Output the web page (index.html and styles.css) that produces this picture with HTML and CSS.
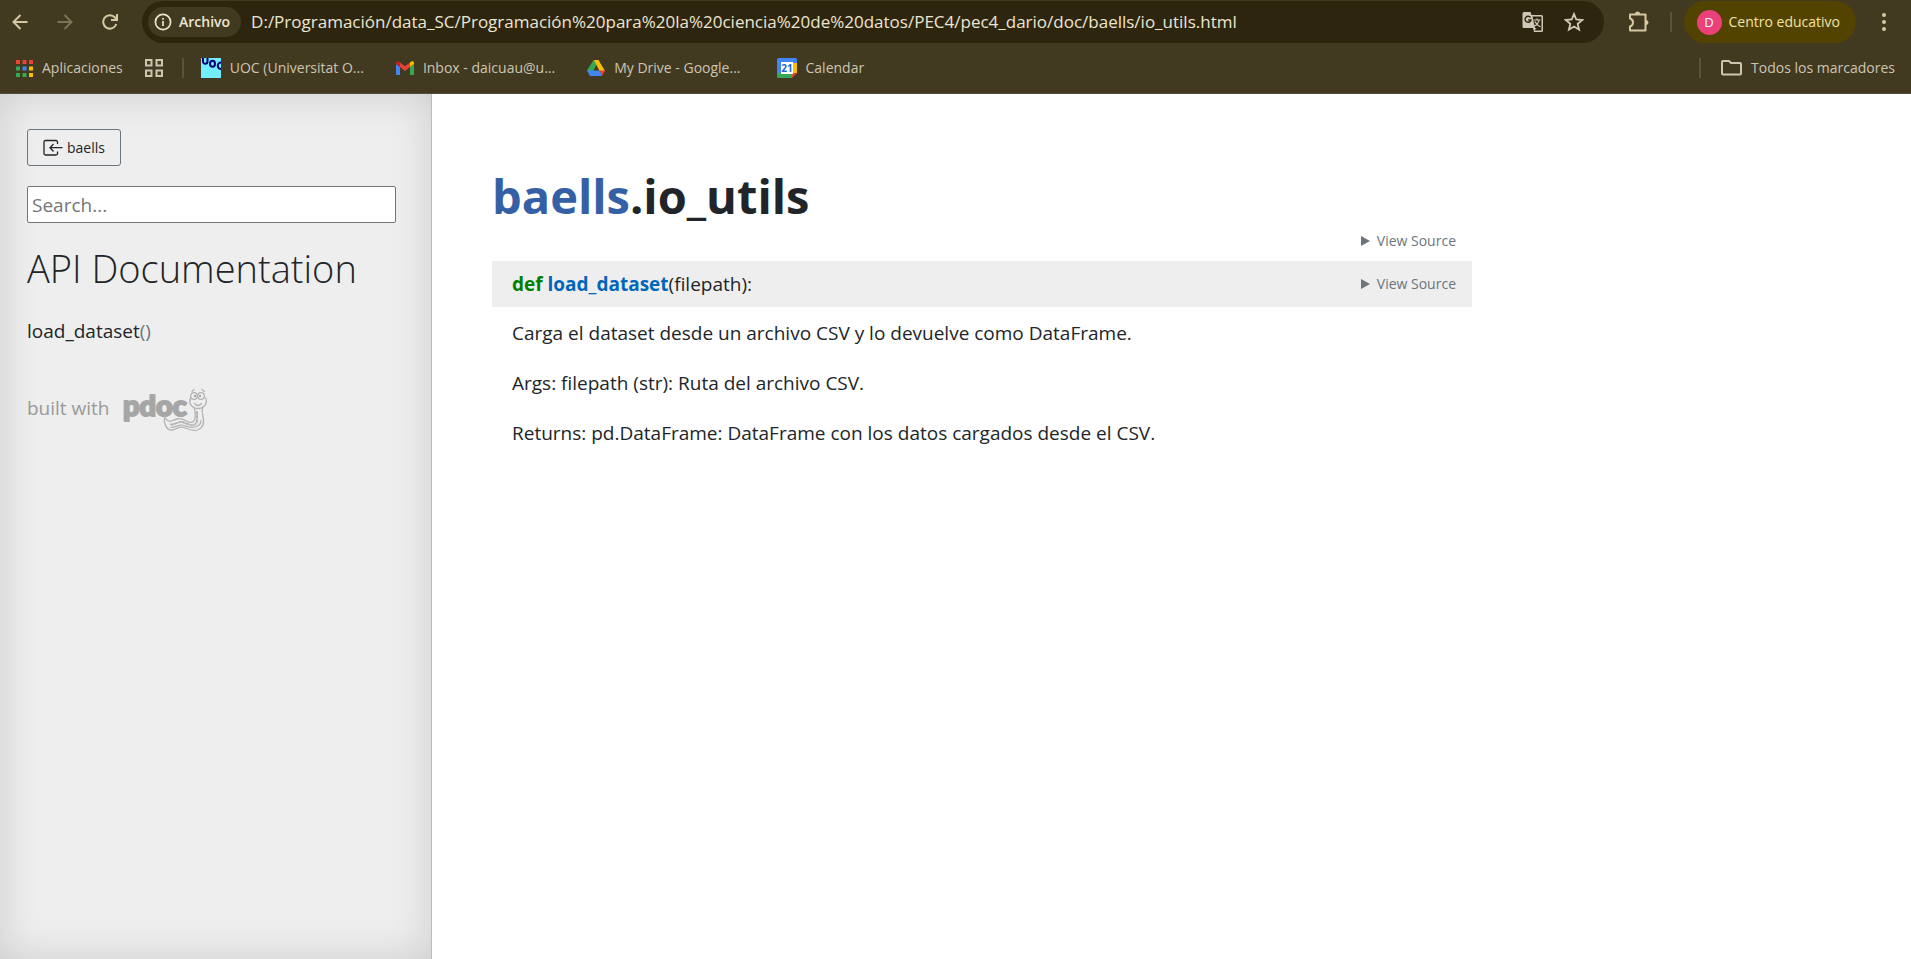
FILE: index.html
```html
<!DOCTYPE html>
<html lang="es">
<head>
<meta charset="utf-8">
<title>baells.io_utils API documentation</title>
<link rel="stylesheet" href="styles.css">
</head>
<body>
<header class="browser">
  <div class="toolbar">
    <div class="nav-buttons">
      <button class="icon-button" aria-label="Atrás"><svg width="16" height="16" viewBox="0 0 16 16" fill="none" stroke="#d6c9a2" stroke-width="2"><path d="M15.500 8H2M8.500 1L1.500 8l7 7"/></svg></button>
      <button class="icon-button" aria-label="Adelante"><svg width="16" height="16" viewBox="0 0 16 16" fill="none" stroke="#7e7354" stroke-width="2"><path d="M.5 8H14M7.500 1l7 7-7 7"/></svg></button>
      <button class="icon-button" aria-label="Recargar"><svg width="16" height="16" viewBox="0 0 16 16" fill="none" stroke="#d6c9a2" stroke-width="2"><path d="M14.300 10A6.700 6.700 0 1 1 13 3.500L14.500 5.500M15 0v6H9"/></svg></button>
    </div>
    <div class="omnibox">
      <button class="chip"><svg width="18" height="18" viewBox="0 0 18 18" fill="none" stroke="#ece5d3" stroke-width="1.700"><circle cx="9" cy="9" r="7.600"/><path d="M9 8v5M9 5v1.800"/></svg>Archivo</button>
      <input class="url" aria-label="Dirección" value="D:/Programación/data_SC/Programación%20para%20la%20ciencia%20de%20datos/PEC4/pec4_dario/doc/baells/io_utils.html">
      <button class="icon-button" aria-label="Traducir"><svg width="22" height="22" viewBox="0 0 22 22"><path d="M2 1h6.500l1 3H19.500a1.500 1.500 0 0 1 1.500 1.500v14a1.500 1.500 0 0 1-1.500 1.500H12l-1-4H2A1.500 1.500 0 0 1 .5 15.500v-13A1.500 1.500 0 0 1 2 1z" fill="#cfc8b8"/><path d="M10.500 5.500h9v14h-7l2-2.500h-1.500z" fill="#2e250e"/><path d="M8.500 6.500A3 3 0 1 0 9 9H6.200" fill="none" stroke="#2e250e" stroke-width="1.400"/><path d="M11.500 9h7M15 7.500V9M17 9c-.5 3-2.500 5-5 6.500M13 10.500c1 2.500 3 4.500 5.500 5.500" fill="none" stroke="#cfc8b8" stroke-width="1.200"/></svg></button>
      <button class="icon-button" aria-label="Añadir a marcadores"><svg width="20" height="20" viewBox="0 0 20 20" fill="none" stroke="#d5ccb8" stroke-width="1.800"><path d="M10 2l2.300 5.500 6 .5-4.600 3.900 1.400 5.800L10 14.600l-5.100 3.100 1.400-5.800L1.700 8l6-.5z"/></svg></button>
    </div>
    <div class="toolbar-end">
      <button class="icon-button" aria-label="Extensiones"><svg width="22" height="22" viewBox="0 0 22 22"><path d="M2 3.500H17.500V19.500H2V15.500Q5 14.500 5 11.500T2 7.500z" fill="none" stroke="#d6c9a2" stroke-width="2" stroke-linejoin="round"/><path d="M7 3a2.500 2.500 0 0 1 5 0zM18 9a2.500 2.500 0 0 1 0 5z" fill="#d6c9a2"/></svg></button>
      <span class="divider"></span>
      <button class="profile"><span class="avatar">D</span>Centro educativo</button>
      <button class="icon-button" aria-label="Menú"><svg width="6" height="18" viewBox="0 0 6 18" fill="#d6c9a2"><circle cx="3" cy="2" r="2"/><circle cx="3" cy="9" r="2"/><circle cx="3" cy="16" r="2"/></svg></button>
    </div>
  </div>
  <nav class="bookmarks" aria-label="Marcadores">
    <a class="bookmark" href="#"><svg width="17" height="17" viewBox="0 0 17 17"><path fill="#ea4335" d="M0 0h4v4H0zM6.500 0h4v4h-4zM13 0h4v4h-4z"/><path fill="#34a853" d="M0 6.500h4v4H0zM0 13h4v4H0zM6.500 13h4v4h-4z"/><path fill="#4285f4" d="M6.500 6.500h4v4h-4z"/><path fill="#fbbc04" d="M13 6.500h4v4h-4zM13 13h4v4h-4z"/></svg>Aplicaciones</a>
    <button class="icon-button groups" aria-label="Grupos de pestañas"><svg width="18" height="18" viewBox="0 0 18 18" fill="none" stroke="#cdc5b2" stroke-width="2"><path d="M1 1h5.500v5.500H1zM11.500 1H17v5.500h-5.500zM1 11.500h5.500V17H1zM11.500 11.500H17V17h-5.500z"/></svg></button>
    <span class="divider"></span>
    <a class="bookmark uoc" href="#"><svg width="20" height="20" viewBox="0 0 20 20"><path fill="#73edff" d="M0 0h20v20H0z"/><g fill="none" stroke="#000078" stroke-width="2"><path d="M2 0v3.500a2 2 0 0 0 4.500 0V0M20 4.500a2.800 2.800 0 1 0 0 6.500"/><ellipse cx="11.500" cy="5.700" rx="2.500" ry="3"/></g></svg>UOC (Universitat O...</a>
    <a class="bookmark" href="#"><svg width="18" height="14" viewBox="0 0 18 14"><path fill="#4285f4" d="M0 3l4 3v8H1a1 1 0 0 1-1-1z"/><path fill="#34a853" d="M14 6l4-3v10a1 1 0 0 1-1 1h-3z"/><path fill="#ea4335" d="M4 1.500L9 5.300l5-3.800V6L9 9.900 4 6z"/><path fill="#c5221f" d="M0 2C0 0 2-.5 4 1.500V6L0 3z"/><path fill="#fbbc04" d="M18 2c0-2-2-2.500-4-.5V6l4-3z"/></svg>Inbox - daicuau@u...</a>
    <a class="bookmark" href="#"><svg width="18" height="16" viewBox="0 0 18 16"><path fill="#34a853" d="M6.500 0H9l1.500 3-6.500 12-4-4.500z"/><path fill="#fbbc04" d="M7 0h4.500L18 11h-5.500z"/><path fill="#4285f4" d="M0 10.500h13L15 16H3z"/><path fill="#ea4335" d="M12.500 10.500H18L15 16z"/></svg>My Drive - Google...</a>
    <a class="bookmark calendar" href="#"><svg width="20" height="20" viewBox="0 0 20 20"><path fill="#4285f4" d="M0 1.500A1.500 1.500 0 0 1 1.500 0h17A1.500 1.500 0 0 1 20 1.500V5H5v10H0z"/><path fill="#fbbc04" d="M15 5h5v10h-5z"/><path fill="#34a853" d="M0 15h15v5H1.500A1.500 1.500 0 0 1 0 18.500z"/><path fill="#ea4335" d="M15 15h5l-5 5z"/><path fill="#fff" d="M4 4h12v12H4z"/><text x="10" y="14" text-anchor="middle" class="calendar-day">21</text></svg>Calendar</a>
    <div class="bookmarks-end">
      <span class="divider"></span>
      <a class="bookmark" href="#"><svg width="21" height="16" viewBox="0 0 21 16" fill="none" stroke="#cdc5b2" stroke-width="2"><path stroke-linejoin="round" d="M1 2.500V13.500A1 1 0 0 0 2 14.500H19a1 1 0 0 0 1-1V4a1 1 0 0 0-1-1H10L8 1H2A1 1 0 0 0 1 2z"/></svg>Todos los marcadores</a>
    </div>
  </nav>
</header>
<div class="page">
  <nav class="sidebar" aria-label="Documentación">
    <a class="module-button" href="#"><svg width="20" height="18" viewBox="0 0 20 18" fill="none" stroke="#212529" stroke-width="1.300"><path d="M14.500 5V3A1.500 1.500 0 0 0 13 1.500H2.500A1.500 1.500 0 0 0 1 3v11.500A1.500 1.500 0 0 0 2.500 16H13a1.500 1.500 0 0 0 1.500-1.500v-2M19.500 8.700H7M10.500 5L7 8.700l3.500 3.800"/></svg>baells</a>
    <input class="search" type="search" placeholder="Search..." aria-label="Search">
    <h2 class="sidebar-title">API Documentation</h2>
    <a class="member" href="#load_dataset">load_dataset<span class="parens">()</span></a>
    <a class="attribution" href="#">built with
      <svg width="88" height="46" viewBox="0 0 88 46" role="img" aria-label="pdoc">
        <text x="2" y="28" class="logo-word">pdoc</text>
        <g fill="none" stroke="#b4b4b4" stroke-width="1.300" stroke-linecap="round">
          <path d="M71 3.500l2-2M81 1.500l2.500 2"/>
          <circle cx="73" cy="8" r="3.300"/><circle cx="80" cy="8" r="3.300"/>
          <path d="M69.500 10c-2 5 1 10.500 7.500 10.500s10-5.500 7.500-10.500M73.500 15.500q3.500 4 7 0"/>
          <path d="M73.500 20c1 5 1 9 0 12-1 3-5 3-8 1-7-4-11-2-15 0-3 1-5-1-7-4-1 6 2 14 8 13 5-1 7-5 13-2 10 5 19 2 18-9-1-5-2-7-1-11"/>
          <path d="M50 36.500c5 0 8-4 13-2 6 3 13 5 13-3V22" stroke-width="2" stroke-dasharray="2 2"/>
          <path d="M50 39.500c5 0 8-4 13-2 9 4 17 1 17-5"/>
        </g>
        <circle cx="74" cy="8" r="1.200" fill="#aaa"/><circle cx="79" cy="8" r="1.200" fill="#aaa"/>
      </svg>
    </a>
  </nav>
  <main class="content">
    <section class="module">
      <h1 class="module-name"><a href="#">baells</a>.io_utils</h1>
      <button class="view-source"><svg width="9" height="10" viewBox="0 0 9 10"><path d="M0 0l9 5-9 5z" fill="#6c757d"/></svg>View Source</button>
    </section>
    <section id="load_dataset">
      <div class="signature">
        <span><b class="keyword">def</b> <b class="function-name">load_dataset</b>(filepath):</span>
        <button class="view-source"><svg width="9" height="10" viewBox="0 0 9 10"><path d="M0 0l9 5-9 5z" fill="#6c757d"/></svg>View Source</button>
      </div>
      <div class="docstring">
        <p>Carga el dataset desde un archivo CSV y lo devuelve como DataFrame.</p>
        <p>Args: filepath (str): Ruta del archivo CSV.</p>
        <p>Returns: pd.DataFrame: DataFrame con los datos cargados desde el CSV.</p>
      </div>
    </section>
  </main>
</div>
</body>
</html>
```
FILE: styles.css
```css
* { box-sizing: border-box; }
body {
  margin: 0;
  min-height: 100vh;
  display: flex;
  flex-direction: column;
  font: 19px/30px "Open Sans", "Noto Sans", sans-serif;
  color: #212529;
  background: #fff;
}
a { color: inherit; text-decoration: none; }
button { font: inherit; color: inherit; background: none; border: 0; padding: 0; }
svg { flex: none; }

.browser { background: #423921; color: #cdc5b2; height: 94px; border-bottom: 1px solid #554d38; font-size: 14px; line-height: 20px; }
.toolbar { display: flex; align-items: center; height: 43px; padding: 1px 24px 0 12px; }
.icon-button { display: flex; align-items: center; }
.nav-buttons { display: flex; gap: 29px; margin-right: 24px; }
.omnibox { flex: 1; min-width: 0; display: flex; align-items: center; gap: 20px; height: 42px; padding: 0 20px 0 6px; border-radius: 21px; background: #2e250e; }
.chip { display: flex; align-items: center; gap: 7px; height: 30px; padding: 0 11px 0 6px; border-radius: 15px; background: #423921; color: #ece5d3; font-weight: 600; }
.url { flex: 1; min-width: 0; margin-left: -10px; padding: 0; border: 0; background: none; color: #ece5d3; font: inherit; font-size: 17px; }
.toolbar-end { display: flex; align-items: center; margin-left: 24px; }
.divider { width: 2px; height: 20px; background: #5c5235; }
.toolbar-end .divider { margin: 0 12px 0 20px; }
.profile { display: flex; align-items: center; gap: 7px; height: 42px; padding: 0 16px 0 13px; margin-right: 25px; border-radius: 21px; background: #524400; color: #f3e2a6; white-space: nowrap; }
.avatar { width: 25px; height: 25px; border-radius: 50%; background: #ec407a; color: #fff; font-size: 13px; line-height: 25px; text-align: center; }
.bookmarks { display: flex; align-items: center; height: 50px; padding: 0 16px; }
.bookmark { display: flex; align-items: center; gap: 9px; margin-right: 32px; white-space: nowrap; }
.bookmark:first-child { margin-right: 22px; }
.groups { margin-right: 19px; }
.uoc { margin-left: 17px; }
.calendar { margin-left: 4px; }
.calendar-day { font: bold 10px "Open Sans", sans-serif; fill: #1967d2; }
.bookmarks-end { display: flex; align-items: center; gap: 20px; margin-left: auto; }
.bookmarks-end .bookmark { margin: 0; }

.page { flex: 1; display: flex; }
.sidebar { width: 432px; padding: 35px 35px 0 27px; background: #eee; border-right: 1px solid #bbb; box-shadow: inset 0 0 40px rgba(0, 0, 0, 0.14); }
.module-button { display: flex; align-items: center; gap: 4px; width: max-content; height: 37px; padding: 0 15px; border: 1px solid #6c757d; border-radius: 3px; font-size: 14px; }
.search { display: block; width: 100%; height: 37px; margin: 20px 0 0; padding: 0 4px; border: 1px solid #767676; border-radius: 2px; background: #fff; font: inherit; }
.search::placeholder { color: #757575; }
.sidebar-title { margin: 20px 0 23px; font-size: 38px; line-height: 50px; font-weight: 300; white-space: nowrap; }
.member { display: block; }
.parens { color: #6c757d; }
.attribution { display: flex; align-items: flex-start; gap: 11px; margin-top: 42px; color: #999; line-height: 40px; }
.logo-word { font: 900 29px Lato, sans-serif; fill: #a6a6a6; stroke: #a6a6a6; stroke-width: 2; stroke-linejoin: round; }

.content { flex: 1; min-width: 0; max-width: 1060px; padding: 72px 20px 40px 60px; }
.module-name { margin: 0; font-size: 47px; line-height: 60px; font-weight: 700; }
.module-name a { color: #3660a5; }
.view-source { display: flex; align-items: center; gap: 7px; color: #6c757d; font-size: 14px; line-height: 30px; }
.module .view-source { margin: 0 16px 5px auto; height: 30px; }
.signature { display: flex; align-items: center; justify-content: space-between; height: 46px; padding: 0 16px 0 20px; background: #eee; }
.keyword { color: #008000; }
.function-name { color: #0066bb; }
.docstring { padding: 11px 20px; }
.docstring p { margin: 0 0 20px; }
```
